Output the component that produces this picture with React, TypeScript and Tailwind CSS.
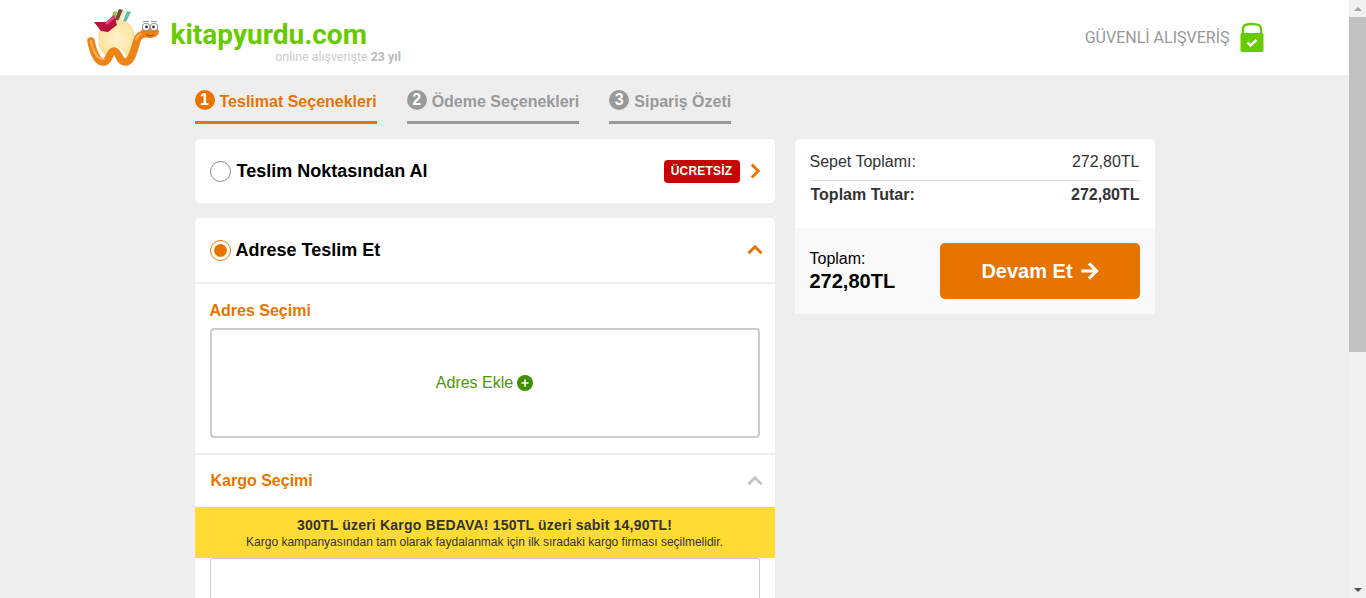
import { ChevronRight, ChevronUp, ArrowRight, Plus } from 'lucide-react';

const sans = "font-['Liberation_Sans',Arial,sans-serif]";

const STEPS = [
  { n: 1, label: 'Teslimat Seçenekleri', active: true },
  { n: 2, label: 'Ödeme Seçenekleri', active: false },
  { n: 3, label: 'Sipariş Özeti', active: false },
];

const Logo = () => (
  <svg width="90" height="65" viewBox="0 0 90 65" className="shrink-0">
    <defs>
      <radialGradient id="sack" cx="50%" cy="50%" r="62%">
        <stop offset="0%" stopColor="#fff3cc" />
        <stop offset="65%" stopColor="#fde7a6" />
        <stop offset="100%" stopColor="#fbd47c" />
      </radialGradient>
    </defs>
    {/* books */}
    <path d="M29 16 L33 6 L36 7 L33 17 Z" fill="#8cc63f" />
    <path d="M33 16 L38 4 L42 5 L37 17 Z" fill="#7a4a2a" />
    <path d="M37 17 L42 5 L45 6 L40 18 Z" fill="#f3e6c8" />
    <path d="M41 18 L46 6 L50 7 L44 19 Z" fill="#5cc0b0" />
    {/* sack */}
    <path d="M22 19 C28 15 38 14 46 17 C50 20 53 24 53 28 C56 32 56 38 53 42 C52 47 49 51 46 52 C42 46 38 41 33 43 C29 45 27 50 24 50 C20 46 17 42 18 36 C16 30 18 24 22 19 Z" fill="url(#sack)" />
    {/* red book */}
    <path d="M13 17 L25 17 L33 10 L36 20 L27 27 L20 26 Z" fill="#b5123e" />
    <path d="M24 18 L33 11 L34 13 L26 20 Z" fill="#e0507a" />
    {/* worm */}
    <path d="M10 36 C12 46 16 58 23 57 C29 56 28 46 33 46 C38 46 38 58 45 57 C52 56 53 42 57 33 C59 29 63 29 67 28" fill="none" stroke="#ee8318" strokeWidth="7.5" strokeLinecap="round" strokeLinejoin="round" />
    <path d="M10 36 C12 45 16 55 23 54" fill="none" stroke="#fbb060" strokeWidth="2" strokeLinecap="round" />
    <path d="M55 34 C57 30 60 28 64 27" fill="none" stroke="#fbb060" strokeWidth="2" strokeLinecap="round" />
    <ellipse cx="69" cy="27" rx="9" ry="6" fill="#ee8318" />
    {/* eyes */}
    <circle cx="65" cy="22" r="3.8" fill="#fff" stroke="#777" strokeWidth="0.8" />
    <circle cx="73" cy="22" r="3.8" fill="#fff" stroke="#777" strokeWidth="0.8" />
    <circle cx="65.5" cy="22" r="1.4" fill="#333" />
    <circle cx="72.5" cy="22" r="1.4" fill="#333" />
    <path d="M62 16.5 H68 M70 16.5 H76" stroke="#999" strokeWidth="1" />
    <path d="M65 29 C67 31.5 71 31.5 73 29" fill="none" stroke="#8a3b00" strokeWidth="0.9" />
  </svg>
);

const Lock = () => (
  <svg width="24" height="30" viewBox="0 0 24 30" className="shrink-0">
    <path d="M3 12 V7 C3 3 6 2 12 2 C18 2 21 3 21 7 V12" fill="none" stroke="#66cc00" strokeWidth="2.4" />
    <rect x="0.5" y="11" width="23" height="19" rx="1.5" fill="#66cc00" />
    <path d="M7.5 20.5 L10.5 23.5 L16.5 18" fill="none" stroke="#fff" strokeWidth="2.4" />
  </svg>
);

const Scrollbar = () => (
  <div className="w-[17px] shrink-0 h-full bg-[#f1f1f1] flex flex-col">
    <div className="h-[17px] flex items-center justify-center">
      <div className="w-0 h-0 border-x-[4px] border-x-transparent border-b-[4px] border-b-[#a3a3a3]" />
    </div>
    <div className="h-[335px] bg-[#c1c1c1]" />
    <div className="flex-1" />
    <div className="h-[17px] flex items-center justify-center">
      <div className="w-0 h-0 border-x-[4px] border-x-transparent border-t-[4px] border-t-[#505050]" />
    </div>
  </div>
);

export default function App() {
  return (
    <div className={`h-[598px] w-full flex overflow-hidden bg-[#eeeeee] ${sans}`}>
      <div className="flex-1 min-w-0 overflow-hidden">
        {/* Header */}
        <header className="h-[75px] bg-white">
          <div className="w-[1176px] mx-auto h-full flex items-start justify-between">
            <div className="flex items-start">
              <div className="-ml-[6px] mt-[5px]"><Logo /></div>
              <div className="mt-[20px]">
                <div className="font-['Roboto',sans-serif] font-bold text-[28px] leading-[30px] text-[#66cc00]">kitapyurdu.com</div>
                <div className="font-['Roboto',sans-serif] text-[12.4px] leading-[14px] text-[#cccccc] text-right -mr-[34px]">
                  online alışverişte <b className="text-[#bbbbbb]">23 yıl</b>
                </div>
              </div>
            </div>
            <div className="flex items-start mt-[22px] -mr-[1px] gap-[10px]">
              <span className="font-['Roboto',sans-serif] text-[16px] leading-[30px] mt-px text-[#999]">GÜVENLİ ALIŞVERİŞ</span>
              <Lock />
            </div>
          </div>
        </header>

        <div className="w-[960px] mx-auto">
          {/* Steps */}
          <div className="flex gap-[30px] h-[49px] pt-[12px]">
            {STEPS.map(s => (
              <div key={s.n} className={`h-[37px] flex items-start gap-[5px] border-b-[3px] ${s.active ? 'border-[#e87400] text-[#e87400]' : 'border-[#999] text-[#999]'}`}>
                <span className={`mt-[3px] w-5 h-5 rounded-full flex items-center justify-center text-white text-[16px] font-bold ${s.active ? 'bg-[#e87400]' : 'bg-[#999]'}`}>{s.n}</span>
                <span className="font-bold text-[16px] leading-[30px]">{s.label}</span>
              </div>
            ))}
          </div>

          <div className="flex gap-5 mt-[15px]">
            {/* Left column */}
            <div className="w-[580px] shrink-0">
              <div className="h-16 bg-white rounded-[5px] flex items-center pl-[15px] pr-[7px]">
                <span className="w-[21px] h-[21px] rounded-full border border-[#888] bg-white shrink-0" />
                <span className="ml-[6px] font-bold text-[18px] text-black">Teslim Noktasından Al</span>
                <span className="ml-auto h-[23px] w-[76px] rounded-[4px] bg-[#cc0000] text-white font-bold text-[12px] tracking-[0.2px] flex items-center justify-center">ÜCRETSİZ</span>
                <ChevronRight className="ml-[2px] w-[26px] h-[26px] text-[#e87400]" strokeWidth={2.7} strokeLinecap="butt" strokeLinejoin="miter" />
              </div>

              <div className="mt-[15px] bg-white rounded-t-[5px]">
                <div className="h-[66px] flex items-center pl-[15px] pr-[7px] border-b-2 border-[#eeeeee]">
                  <span className="w-[21px] h-[21px] rounded-full border border-[#e87400] flex items-center justify-center shrink-0">
                    <span className="w-[13px] h-[13px] rounded-full bg-[#e87400]" />
                  </span>
                  <span className="ml-[5px] font-bold text-[18px] text-black">Adrese Teslim Et</span>
                  <ChevronUp className="ml-auto w-[26px] h-[26px] text-[#e87400]" strokeWidth={2.7} strokeLinecap="butt" strokeLinejoin="miter" />
                </div>

                <div className="px-[15px] h-[171px] border-b-2 border-[#eeeeee]">
                  <div className="pt-[17px] h-[44px] text-[16px] leading-[20px] font-bold text-[#e87400]">Adres Seçimi</div>
                  <div className="h-[110px] border-2 border-[#cccccc] rounded-[4px] flex items-center justify-center gap-1 text-[16px] text-[#4c9900]">
                    Adres Ekle
                    <span className="w-4 h-4 rounded-full bg-[#3f8f00] flex items-center justify-center">
                      <Plus className="w-[10px] h-[10px] text-white" strokeWidth={4} />
                    </span>
                  </div>
                </div>

                <div className="h-[52px] flex items-center justify-between pl-[16px] pr-[7px]">
                  <span className="font-bold text-[16px] text-[#e87400]">Kargo Seçimi</span>
                  <ChevronUp className="w-[26px] h-[26px] text-[#c4c4c4]" strokeWidth={2.7} strokeLinecap="butt" strokeLinejoin="miter" />
                </div>

                <div className="h-[51px] bg-[#ffdb33] text-center text-[#333] pt-[10px]">
                  <div className="font-bold text-[14px] leading-[17px] tracking-[0.2px]">300TL üzeri Kargo BEDAVA! 150TL üzeri sabit 14,90TL!</div>
                  <div className="text-[12px] leading-[15px] mt-[1px]">Kargo kampanyasından tam olarak faydalanmak için ilk sıradaki kargo firması seçilmelidir.</div>
                </div>

                <div className="px-[15px] h-[60px]">
                  <div className="h-full border border-[#cccccc] border-b-0 rounded-t-[3px]" />
                </div>
              </div>
            </div>

            {/* Right column */}
            <div className="w-[360px] shrink-0">
              <div className="bg-white rounded-t-[5px] h-[89px] px-[15px] pt-[14px]">
                <div className="flex justify-between text-[16px] leading-[18px] text-[#333] border-b border-[#dddddd] h-[28px]">
                  <span>Sepet Toplamı:</span>
                  <span>272,80TL</span>
                </div>
                <div className="flex justify-between font-bold text-[16px] leading-[28px] text-[#333]">
                  <span className="ml-px">Toplam Tutar:</span>
                  <span>272,80TL</span>
                </div>
              </div>
              <div className="bg-[#f9f9f9] h-[86px] flex items-center justify-between px-[15px]">
                <div className="text-black pt-[1px]">
                  <div className="text-[16px] leading-[18px]">Toplam:</div>
                  <div className="font-bold text-[20px] leading-[26px]">272,80TL</div>
                </div>
                <button className="w-[200px] h-14 pl-[4px] rounded-[5px] bg-[#e87400] text-white font-bold text-[20px] flex items-center justify-center gap-[3px]">
                  Devam Et <ArrowRight className="w-[26px] h-[26px]" strokeWidth={2.8} strokeLinecap="butt" strokeLinejoin="miter" />
                </button>
              </div>
            </div>
          </div>
        </div>
      </div>
      <Scrollbar />
    </div>
  );
}
